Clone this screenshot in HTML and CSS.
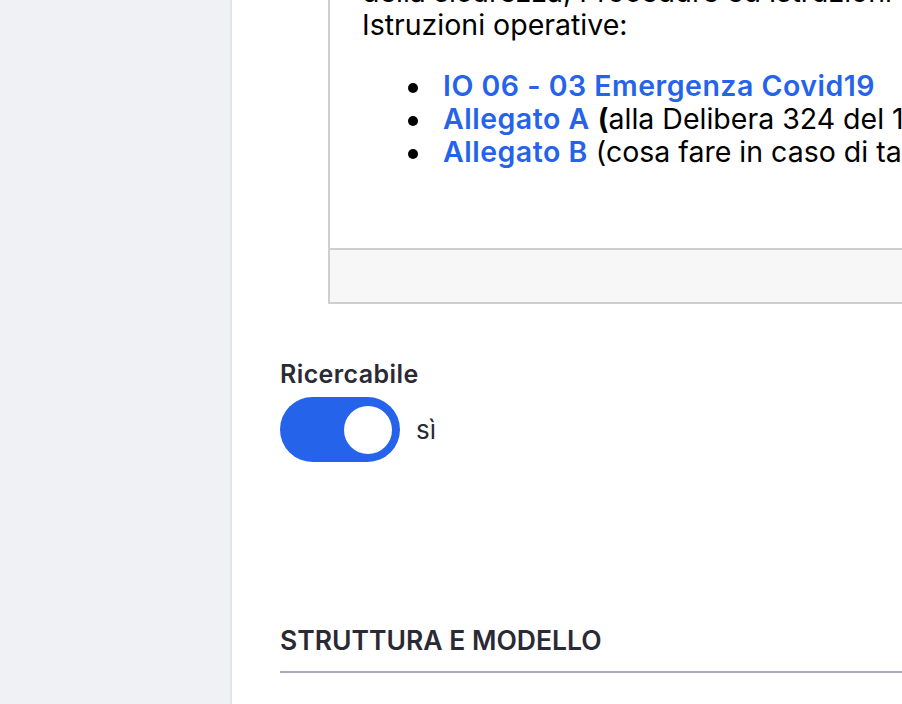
FILE: index.html
```html
<!DOCTYPE html>
<html lang="it">
<head>
    <meta charset="UTF-8">
    <title>Modifica pagina</title>
    <link rel="stylesheet" href="styles.css">
</head>
<body>
    <div class="layout">
        <aside class="sidebar"></aside>
        <main class="main">
            <div class="editor">
                <div class="editor-body">
                    <p>della sicurezza, Procedure ed Istruzioni<br>Istruzioni operative:</p>
                    <ul>
                        <li><a href="#">IO 06 - 03 Emergenza Covid19</a></li>
                        <li><a href="#">Allegato A</a> <b>(</b>alla Delibera 324 del 1</li>
                        <li><a href="#">Allegato B</a> (cosa fare in caso di ta</li>
                    </ul>
                </div>
                <div class="editor-footer"></div>
            </div>

            <div class="field">
                <label class="field-label">Ricercabile</label>
                <div class="toggle-row">
                    <span class="toggle"><span class="knob"></span></span>
                    <span class="toggle-text">sì</span>
                </div>
            </div>

            <h3 class="section-title">STRUTTURA E MODELLO</h3>
        </main>
    </div>
</body>
</html>
```

FILE: styles.css
```css
body { margin: 0; font-family: Inter, "Noto Sans", sans-serif; background: #fff; color: #2a2a35; overflow: hidden; }
.layout { display: flex; min-height: 704px; }
.sidebar { width: 230px; flex-shrink: 0; background: #f0f1f5; border-right: 2px solid #e4e4ee; }
.main { flex: 1; padding-left: 48px; min-width: 0; overflow: hidden; }

.editor { margin-left: 48px; margin-top: -25px; width: 900px; border: 2px solid #cfcfcf; border-top: none; }
.editor-body { padding: 0 32px 52px; font-size: 28.5px; line-height: 33px; color: #000; }
.editor-body p { margin: 0; white-space: nowrap; }
.editor-body ul { margin: 28px 0; padding-left: 81px; list-style: none; white-space: nowrap; }
.editor-body li::before { content: ""; display: inline-block; width: 10px; height: 10px; margin: 0 25px 0 -35px; border-radius: 50%; background: #000; vertical-align: middle; }
.editor-body a { color: #2563eb; font-weight: 600; letter-spacing: 0.5px; text-decoration: none; }
.editor-footer { height: 52px; background: #f7f7f7; border-top: 2px solid #cfcfcf; }

.field { margin-top: 55px; }
.field-label { display: block; font-size: 25px; font-weight: 600; line-height: 30px; letter-spacing: 0.4px; }
.toggle-row { display: flex; align-items: center; gap: 16px; margin-top: 8px; }
.toggle { display: flex; align-items: center; justify-content: flex-end; width: 120px; height: 65px; padding: 0 8px; box-sizing: border-box; border-radius: 33px; background: #2563eb; }
.knob { width: 48px; height: 48px; border-radius: 50%; background: #fff; }
.toggle-text { font-size: 26px; }

.section-title { margin: 162px 0 0; padding-bottom: 15px; font-size: 26.5px; line-height: 32px; font-weight: 600; border-bottom: 2px solid #a6a9b8; }
```
